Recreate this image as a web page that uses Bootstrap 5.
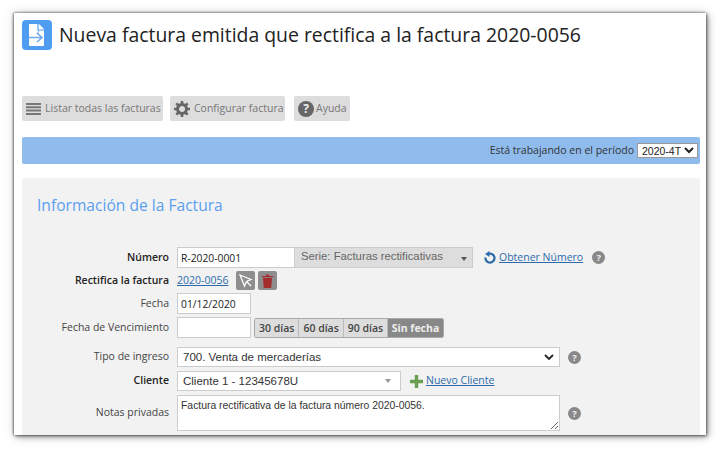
<!DOCTYPE html>
<html lang="es">
<head>
<meta charset="utf-8">
<title>Nueva factura</title>
<link href="https://cdn.jsdelivr.net/npm/bootstrap@5.3.0/dist/css/bootstrap.min.css" rel="stylesheet">
<style>
html,body{height:450px;overflow:hidden;background:#fff}
body{font-family:"Open Sans",sans-serif;font-size:11px;color:#333;padding:13px 14px 15px}
.win{height:422px;background:#fff;box-shadow:1px 1px 3px rgba(0,0,0,.5),-1px 0 2px rgba(0,0,0,.35),0 -1px 2px rgba(0,0,0,.12),2px 2px 7px rgba(0,0,0,.28),0 0 12px rgba(0,0,0,.12);padding:7px 6px 0 8px;overflow:hidden}
.head{height:30px;gap:7px}
.logo{width:30px;height:30px;background:#4f9cf0;border-radius:4px;flex:none}
.ttl{font-size:19.4px;font-weight:400;color:#222;margin:0;line-height:30px;white-space:nowrap}
.tools{margin-top:46px;height:25px}
.tbtn{background:#ddd;color:#777;border-radius:2px;height:25px;font-size:10.5px;padding:0 4px;border:0;white-space:nowrap}
.tbi{margin-right:4px;flex:none}
.tb1{width:141px;margin-right:7px}.tb2{width:115px;margin-right:9px}.tb3{width:56px;gap:2px}
.period{height:27px;margin-top:16px;background:#8fbbed;border-radius:2px;font-size:10.5px;padding-right:2px;color:#333;gap:3px}
.selp{width:61px;height:15px;font:10.5px/13px "Liberation Sans",sans-serif;padding:0;border:1px solid #999;background:#fff;color:#222}
.panel{margin-top:14px;background:#f2f2f2;height:300px;border-radius:2px;padding:15px 0 0 15px}
.ptitle{font-size:15.600px;font-weight:400;color:#5b9ff0;margin:0;line-height:24px;height:24px}
.frow{margin-left:-15px}
.lbl{width:147px;text-align:right;flex:none;margin-right:8px;font-size:10.5px;color:#444}
.lbl.b{font-weight:600;color:#222}
.fin{border:1px solid #ccc;background:#fff;height:21px;padding:0 3px;font-size:10.300px;color:#222;font-family:"Open Sans",sans-serif;border-radius:0}
.r1{margin-top:30px;height:21px}
.serie{width:178px;height:21px;background:#ddd;border:1px solid #ccc;border-left:0;font:11.3px/15px "Liberation Sans",sans-serif;color:#666;padding:0 5px 3px 6px}
.caret{width:0;height:0;border:3px solid transparent;border-top:4px solid #555;border-bottom:0;margin-top:5px}
.lk{color:#2c6aaa;font-size:10.5px;text-decoration:underline}
.q{width:13px;height:13px;border-radius:50%;background:#888;color:#eee;font:700 9.5px/13px "Open Sans",sans-serif;text-align:center;flex:none}
.qbig{width:16px;height:16px;line-height:16px;font-size:12px;background:#666}
.r2{height:22px;margin-top:1px;padding-top:1px}
.ib{width:19px;height:19px;background:#8e8e8e;border-radius:2px;flex:none}
.ib2{margin-left:3px}
.r3{height:21px;margin-top:2px}
.r4{height:21px;margin-top:3px}
.dbtns{height:20px;margin-left:3px;border:1px solid #aaa;border-radius:2px;overflow:hidden;font-size:10.5px;font-weight:600;color:#444}
.dbtns span{background:#ddd;padding:0 4px;line-height:18px;border-right:1px solid #bbb}
.dbtns .act{background:#888;color:#eee;border:0;padding:0 3.500px;font-weight:700}
.r5{height:20px;margin-top:9px}
.r6{height:20px;margin-top:4px}
.sel{border:1px solid #ccc;background:#fff;height:20px;font:11.5px/18px "Liberation Sans",sans-serif;color:#333;padding:0 5px;width:383px}
.sel2{width:224px}
.tri{width:0;height:0;border:3.5px solid transparent;border-top:4px solid #999;border-bottom:0}
.r7{height:36px;margin-top:4px}
.nota{width:383px;height:36px;border:1px solid #ccc;background:#fff;font:10.4px/13px "Liberation Sans",sans-serif;color:#333;padding:3px;border-radius:0;display:block}
.rel{margin-left:11px;margin-right:2px}
.hlp1{margin-left:9px}
.plus{margin-left:9px;margin-right:3px}
</style>
</head>
<body>
<div class="win">
  <div class="head d-flex align-items-center">
    <div class="logo d-flex align-items-center justify-content-center">
      <svg width="18" height="22" viewBox="0 0 18 22"><path d="M2 0h9l5 5v16a1 1 0 0 1-1 1H2a1 1 0 0 1-1-1V1a1 1 0 0 1 1-1z" fill="#fff"/><path d="M10 0v6h6" fill="none" stroke="#4f9cf0" stroke-width="1.200"/><path d="M1 13.500h12M9 9l5 4.500-5 4.500" fill="none" stroke="#6fa9ee" stroke-width="1.600"/><path d="M11 7l-2 3" stroke="#6fa9ee" stroke-width="1"/></svg>
    </div>
    <h1 class="ttl">Nueva factura emitida que rectifica a la factura 2020-0056</h1>
  </div>
  <div class="tools d-flex">
    <div class="tbtn tb1 d-flex align-items-center">
      <svg class="tbi" width="15" height="12" viewBox="0 0 15 12"><path d="M0 1h15M0 4.300h15M0 7.600h15M0 11h15" stroke="#777" stroke-width="2"/></svg>
      <span>Listar todas las facturas</span>
    </div>
    <div class="tbtn tb2 d-flex align-items-center">
      <svg class="tbi" width="16" height="16" viewBox="0 0 16 16"><circle cx="8" cy="8" r="4.500" fill="none" stroke="#666" stroke-width="3"/><path d="M8 0v3M8 13v3M0 8h3M13 8h3M2.300 2.300l2.200 2.200M11.500 11.500l2.200 2.200M2.300 13.700l2.200-2.200M11.500 4.500l2.200-2.200" stroke="#666" stroke-width="2.600"/></svg>
      <span>Configurar factura</span>
    </div>
    <div class="tbtn tb3 d-flex align-items-center">
      <span class="q qbig">?</span>
      <span>Ayuda</span>
    </div>
  </div>
  <div class="period d-flex align-items-center justify-content-end">
    <span>Está trabajando en el período</span>
    <select class="selp" aria-label="Periodo"><option>2020-4T</option></select>
  </div>
  <div class="panel">
    <h2 class="ptitle">Información de la Factura</h2>
    <div class="frow r1 d-flex align-items-center">
      <label class="lbl b">Número</label>
      <input class="fin" style="width:118px" value="R-2020-0001">
      <div class="serie d-flex justify-content-between align-items-center"><span>Serie: Facturas rectificativas</span><i class="caret"></i></div>
      <svg class="rel" width="13" height="13" viewBox="0 0 13 13"><path d="M4 3a4.500 4.500 0 1 1-2.500 3.500" fill="none" stroke="#2c6aaa" stroke-width="2.200"/><path d="M5.500 0v6L1 3z" fill="#2c6aaa"/></svg>
      <a class="lk" href="#">Obtener Número</a>
      <span class="q hlp1">?</span>
    </div>
    <div class="frow r2 d-flex align-items-center">
      <label class="lbl b">Rectifica la factura</label>
      <a class="lk" href="#">2020-0056</a>
      <div class="ib ms-2 d-flex align-items-center justify-content-center"><svg width="14" height="14" viewBox="0 0 14 14"><path d="M1 1l11 4.500-4.500 2L5.500 12z" fill="none" stroke="#fff" stroke-width="1.300"/><path d="M7.500 7.500l4.500 4.500" stroke="#fff" stroke-width="1.300"/></svg></div>
      <div class="ib ib2 d-flex align-items-center justify-content-center"><svg width="11" height="14" viewBox="0 0 11 14"><path d="M1 4h9l-.6 9a1 1 0 0 1-1 1H2.600a1 1 0 0 1-1-1z" fill="#a32d2d"/><path d="M0 2h11v1.300H0zM4 .5h3V2H4z" fill="#a32d2d"/></svg></div>
    </div>
    <div class="frow r3 d-flex align-items-center">
      <label class="lbl">Fecha</label>
      <input class="fin" style="width:74px" value="01/12/2020">
    </div>
    <div class="frow r4 d-flex align-items-center">
      <label class="lbl">Fecha de Vencimiento</label>
      <input class="fin" style="width:74px" aria-label="Fecha de Vencimiento">
      <div class="dbtns d-flex"><span>30 días</span><span>60 días</span><span>90 días</span><span class="act">Sin fecha</span></div>
    </div>
    <div class="frow r5 d-flex align-items-center">
      <label class="lbl">Tipo de ingreso</label>
      <div class="sel d-flex justify-content-between align-items-center"><span>700. Venta de mercaderías</span>
        <svg width="10" height="6" viewBox="0 0 10 6"><path d="M1 1l4 4 4-4" fill="none" stroke="#222" stroke-width="1.800"/></svg></div>
      <span class="q ms-2">?</span>
    </div>
    <div class="frow r6 d-flex align-items-center">
      <label class="lbl b">Cliente</label>
      <div class="sel sel2 d-flex justify-content-between align-items-center"><span>Cliente 1 - 12345678U</span><i class="tri me-1"></i></div>
      <svg class="plus" width="13" height="13" viewBox="0 0 13 13"><path d="M6.500 0v13M0 6.500h13" stroke="#6a9e50" stroke-width="3.400"/></svg>
      <a class="lk" href="#">Nuevo Cliente</a>
    </div>
    <div class="frow r7 d-flex align-items-center">
      <label class="lbl">Notas privadas</label>
      <textarea class="nota" aria-label="Notas privadas">Factura rectificativa de la factura número 2020-0056.</textarea>
      <span class="q ms-2">?</span>
    </div>
  </div>
</div>
<script src="https://cdn.jsdelivr.net/npm/bootstrap@5.3.0/dist/js/bootstrap.bundle.min.js"></script>
</body>
</html>
